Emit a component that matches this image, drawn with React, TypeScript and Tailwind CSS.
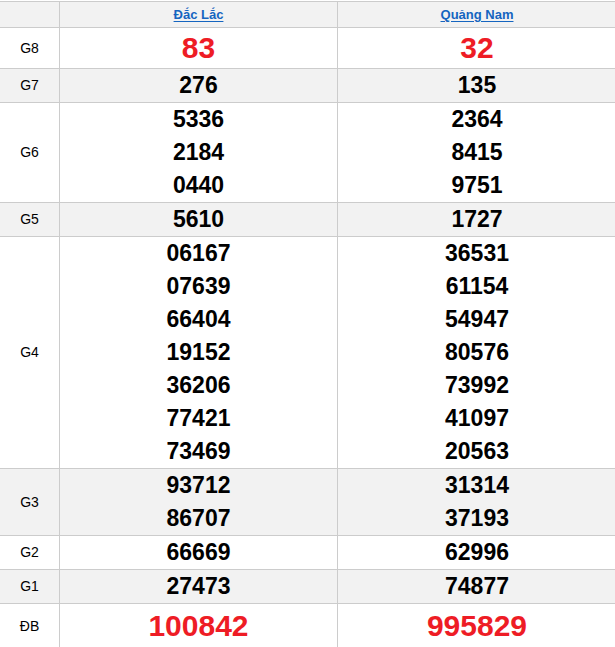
const provinces = ["Đắc Lắc", "Quảng Nam"];

type Row = {
  label: string;
  values: [string[], string[]];
  kind?: "big";
  height?: string;
};

// kết quả xổ số miền Trung, G8 → ĐB
const rows: Row[] = [
  { label: "G8", values: [["83"], ["32"]], kind: "big", height: "h-[41px]" },
  { label: "G7", values: [["276"], ["135"]] },
  { label: "G6", values: [["5336", "2184", "0440"], ["2364", "8415", "9751"]] },
  { label: "G5", values: [["5610"], ["1727"]] },
  {
    label: "G4",
    values: [
      ["06167", "07639", "66404", "19152", "36206", "77421", "73469"],
      ["36531", "61154", "54947", "80576", "73992", "41097", "20563"],
    ],
  },
  { label: "G3", values: [["93712", "86707"], ["31314", "37193"]] },
  { label: "G2", values: [["66669"], ["62996"]] },
  { label: "G1", values: [["27473"], ["74877"]] },
  { label: "ĐB", values: [["100842"], ["995829"]], kind: "big", height: "h-[45px]" },
];

export default function App() {
  return (
    <div className="min-h-screen bg-white pt-px font-['Liberation_Sans',Arial,sans-serif] text-black">
      <div className="w-[617px] border-t border-[#cccccc]">
        <div className="flex h-[26px] border-b border-[#cccccc] bg-[#f2f2f2]">
          <div className="w-[60px] shrink-0 border-r border-[#cccccc]" />
          {provinces.map((p, i) => (
            <div
              key={p}
              className={
                "flex w-[278px] shrink-0 items-center justify-center " +
                (i === 0 ? "border-r border-[#cccccc]" : "")
              }
            >
              <a href="#" className="text-[13px] font-bold text-[#1565c0] underline underline-offset-2">
                {p}
              </a>
            </div>
          ))}
        </div>
        {rows.map((row, idx) => (
          <div
            key={row.label}
            className={
              "flex border-b border-[#cccccc] " +
              (idx % 2 === 1 ? "bg-[#f2f2f2] " : "bg-white ") +
              (row.height ?? "")
            }
          >
            <div className="flex w-[60px] shrink-0 items-center justify-center border-r border-[#cccccc] text-[14px]">
              {row.label}
            </div>
            {row.values.map((vals, i) => (
              <div
                key={i}
                className={
                  "flex w-[278px] shrink-0 flex-col items-center justify-center font-bold " +
                  (i === 0 ? "border-r border-[#cccccc]" : "")
                }
              >
                {vals.map((v) =>
                  row.kind === "big" ? (
                    <span key={v} className="text-[30px] leading-[40px] text-[#ee1c25]">
                      {v}
                    </span>
                  ) : (
                    <span key={v} className="text-[23px] leading-[33px]">
                      {v}
                    </span>
                  )
                )}
              </div>
            ))}
          </div>
        ))}
      </div>
    </div>
  );
}
